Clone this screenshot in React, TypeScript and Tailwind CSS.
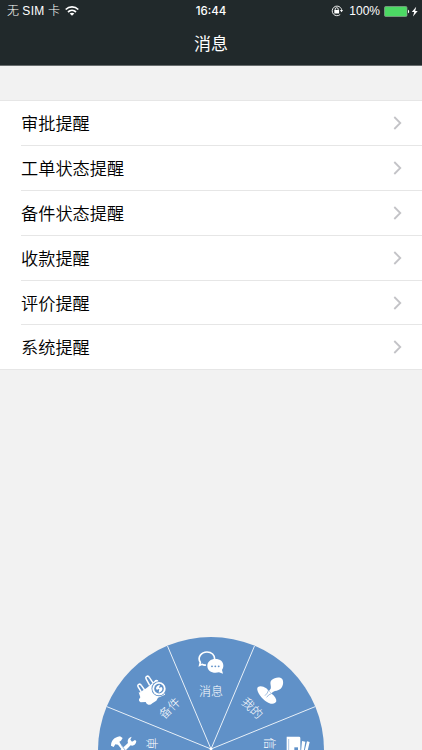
const reminders = ["审批提醒", "工单状态提醒", "备件状态提醒", "收款提醒", "评价提醒", "系统提醒"];

const wheelLabels = [
  { text: "工单", angle: -90 },
  { text: "备件", angle: -45 },
  { text: "消息", angle: 0 },
  { text: "我的", angle: 45 },
  { text: "信息", angle: 90 },
];

function StatusBar() {
  return (
    <div className="grid h-[22px] grid-cols-3 items-center text-[12px] leading-[22px] text-white">
      <div className="flex items-center pl-[7px]">
        <span className="whitespace-pre font-light">无 <span className="font-normal tracking-[0.3px]">SIM</span> 卡</span>
        <svg className="ml-[5px] h-[10px] w-[14px]" viewBox="0 0 14 10" fill="none" stroke="white" strokeWidth="1.7">
          <path d="M.7 3.5C4.3.1 9.7.1 13.3 3.5M3 6c2.3-2.1 5.7-2.1 8 0" />
          <path d="M7 9.8 4.7 7.5c1.2-1.1 3.4-1.1 4.6 0Z" fill="white" stroke="none" />
        </svg>
      </div>
      <div className="text-center text-[11.5px] font-medium [font-family:Inter,sans-serif]">16:44</div>
      <div className="flex items-center justify-end pr-[4px]">
        <svg className="h-[12px] w-[12px]" viewBox="0 0 12 12" fill="none" stroke="white">
          <path d="M9.5 2.6A4.8 4.8 0 1 0 9.2 9.5M9.5 2.6c1 1 1.2 2 1.1 3" strokeWidth=".9" />
          <path d="m8.9 5.1 1.7 2.1 1.4-2.1Z" fill="white" stroke="none" />
          <path d="M4.2 5.3V4.2a1.5 1.5 0 0 1 3 0v1.1" strokeWidth=".9" />
          <path d="M3.3 5h4.8v3.5H3.3Z" fill="white" stroke="none" />
        </svg>
        <span className="ml-[6px] text-[12px] [font-family:'Liberation_Sans',sans-serif]">100%</span>
        <svg className="ml-[4px] h-[11px] w-[34px]" viewBox="0 0 34 11">
          <rect x=".5" y=".5" width="22.5" height="10" rx="1.2" fill="#4cd964" stroke="#8ba391" strokeWidth=".7" />
          <path d="M24 3.7c1.5.3 1.5 3.3 0 3.6Z" fill="white" />
          <path d="m32.2.7-4.4 5.2h2.4l-1.2 4.5 4.7-5.5h-2.5Z" fill="white" />
        </svg>
      </div>
    </div>
  );
}

function PlugIcon() {
  return (
    <g>
      <g fill="none" stroke="white" strokeWidth="4.5" strokeLinejoin="round">
        <path d="m130 165-10-16q-2-5 2-7 5-2 8 3l12 17M155 145l-11-20q-2-5 2-7 5-2 8 3l12 18" />
      </g>
      <path d="M122 166q6 1 10-4l14-9 17-14 9-10q9-2 10 6l20 14-1 24-21 9-5 9-12 8q-6 6-12 4-6-1-8-8l-15 1q-7-3-5-9l4-6Z" fill="white" />
      <circle cx="183" cy="155" r="22.5" fill="#6091c8" />
      <circle cx="183" cy="155" r="20" fill="white" />
      <circle cx="183" cy="155" r="14.5" fill="#6091c8" />
      <path d="M186 143c-14 4-14 14-8 15l6-3-2 12c12-3 14-14 8-17l-7 3Z" fill="white" />
    </g>
  );
}

function ChatIcon() {
  return (
    <g>
      <path d="M324 84q-7 1-12-2l-7 3 2-9C297 61 310 45 327 45c14 0 23 9 23 21" fill="none" stroke="white" strokeWidth="5" />
      <path d="M352 66c15 0 24 8 24 20 0 6-2 9-4 13l3 11-12-4c-19 5-35-4-35-19 0-13 10-21 24-21Z" fill="white" />
      <g fill="#6091c8"><circle cx="342" cy="88" r="2.8" /><circle cx="352" cy="88" r="2.8" /><circle cx="362" cy="88" r="2.8" /></g>
    </g>
  );
}

function PersonIcon() {
  return (
    <g fill="white">
      <path d="M521 129c9-9 25-10 31-4 6 8 4 23-5 31-7 6-15 5-21 8l-6 5-7-7 5-7c3-8-5-18 3-26Z" />
      <path d="M480 150c7-5 16-2 25 4l7 7 9 9c9 7 15 16 14 23-4 11-20 9-34-2-15-12-29-34-21-41Z" />
      <path d="m511 160-3 8-7 8M520 170l-8 4-6 7" fill="none" stroke="#6091c8" strokeWidth="1.8" />
    </g>
  );
}

function ToolsIcon() {
  return (
    <g fill="white">
      <path d="M39 326c0-15 9-25 27-28l8 5-5 8-5 3 4 8 22 22-8 7-22-28-8-1-5 8Z" />
      <path d="m101 299-4 9 5 6 9-5 4 3c-1 12-10 16-17 13l-26 26-9-8 27-25c-3-8 1-16 11-19Z" />
      <path d="m70 325 13 16" stroke="#6091c8" strokeWidth="2" />
    </g>
  );
}

function FilesIcon() {
  return (
    <g>
      <path d="M566 299h37q4 0 4 4v42h-41Z" fill="white" />
      <path d="M572 306v34" stroke="#6091c8" strokeWidth="1.5" />
      <path d="M589 331h11v10h-11Z" fill="#6091c8" />
      <path d="m612 312 10 2-5 31h-8ZM627 313l8 2-7 30h-9Z" fill="white" />
    </g>
  );
}

function MenuWheel() {
  return (
    <svg className="mx-auto block h-[113px] w-[226px]" viewBox="98 637 226 113">
      <circle cx="211" cy="750" r="113" fill="#6091c8" />
      <path d="m211 749-43.5-103M211 749l43.5-103M211 749l-104.5-42.5M211 749l104.5-42.5" stroke="#e8f0f8" strokeWidth="1" />
      <circle cx="211" cy="749" r="1.4" fill="white" />
      {wheelLabels.map(({ text, angle }) => (
        <text key={text} x="211" y="695.5" textAnchor="middle" fontSize="12" fontWeight="300" fill="white" transform={`rotate(${angle} 211 749.5)`}>{text}</text>
      ))}
      <g transform="translate(98 637) scale(.33333)">
        <ToolsIcon />
        <PlugIcon />
        <ChatIcon />
        <PersonIcon />
        <FilesIcon />
      </g>
    </svg>
  );
}

export default function App() {
  return (
    <div className="flex h-[750px] w-[422px] flex-col overflow-hidden bg-[#f2f2f2] [font-family:'Liberation_Sans','Noto_Sans_CJK_SC',sans-serif]">
      <header className="h-[66px] border-b border-[#686d6e] bg-[#21292b]">
        <StatusBar />
        <h1 className="text-center text-[17px] leading-[45px] text-white">消息</h1>
      </header>
      <ul className="mt-[34px] border-y border-[#e6e6e6] bg-white">
        {reminders.map((label) => (
          <li key={label} className="group pl-[21px]">
            <div className="flex h-[44.9px] items-center justify-between border-b border-[#e6e6e6] pr-[20px] group-last:h-[44px] group-last:border-b-0">
              <span className="pt-[3px] text-[17.2px] leading-[41px] font-[350] text-black">{label}</span>
              <svg className="h-[14px] w-[9px]" viewBox="0 0 9 14" fill="none" stroke="#c3c3c7" strokeWidth="1.8">
                <path d="m1.3 1 6 6-6 6" />
              </svg>
            </div>
          </li>
        ))}
      </ul>
      <nav className="mt-auto">
        <MenuWheel />
      </nav>
    </div>
  );
}
